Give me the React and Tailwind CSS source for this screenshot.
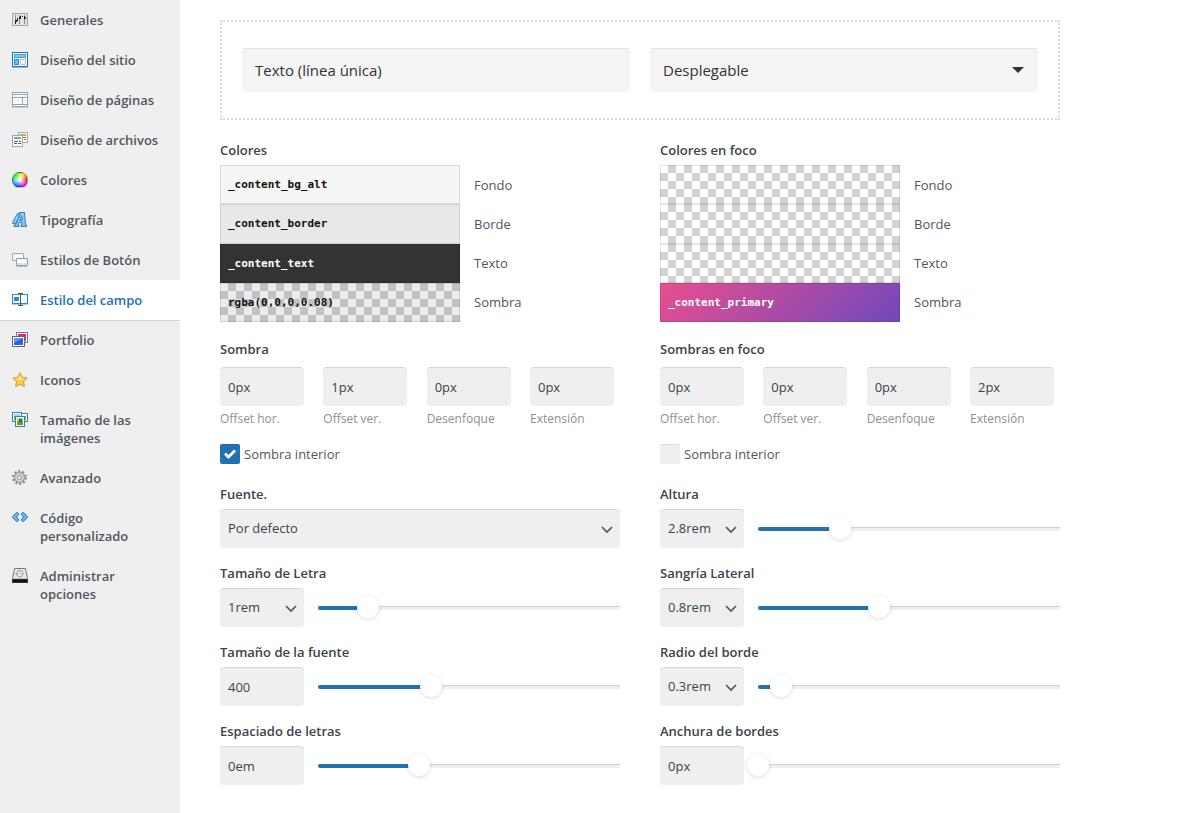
import { useState } from 'react';
import { clsx } from 'clsx';

const FIELD = 'h-[39px] rounded bg-[#efefef] px-2 text-[13px] text-[#3c434a] shadow-[inset_0_1px_0_rgba(0,0,0,0.1)] outline-none';

// 16px sidebar icons
const icons = {
  general: (
    <>
      <rect x="0.5" y="1.5" width="15" height="12" fill="#e4e4e4" stroke="#a5a5a5" />
      <path d="M3.5 3v9M7.5 3v9M12.5 3v9" stroke="#8a8a8a" />
      <path d="M3.5 8v4M5.5 6v3M8.5 4v3M12.5 4v3M10.5 4v1" stroke="#222" />
      <path d="M3 8h2v2H3zM7 5h2v2H7zM12 5h2v2h-2z" fill="#222" />
    </>
  ),
  site: (
    <>
      <rect x="0.5" y="0.5" width="15" height="14" fill="#fff" stroke="#0a7bc4" />
      <rect x="2.5" y="2.5" width="11" height="3" fill="#7fc4f4" stroke="#4a9fdc" />
      <rect x="2.5" y="7.5" width="4" height="5" fill="#6ebcf5" stroke="#2a8bd6" />
      <rect x="8.5" y="7.5" width="5" height="5" fill="#f4f4f4" stroke="#c4c4c4" />
      <path d="M0 15.5h16" stroke="#9dbdd2" />
    </>
  ),
  pages: (
    <>
      <rect x="0.5" y="0.5" width="15" height="14" fill="#fafcfd" stroke="#8ea4b8" />
      <path d="M1 2.5h14M1 5.5h14M10.5 5v7M1 12.5h14" stroke="#8ea4b8" />
      <path d="M3 8.5h5M12 8.5h2" stroke="#e4ebf0" />
      <path d="M0 15.5h16" stroke="#c3ccd4" />
    </>
  ),
  archives: (
    <>
      <rect x="6.5" y="0.5" width="9" height="10" fill="#fff" stroke="#a9a9a9" />
      <path d="M8 3h6" stroke="#f09a28" strokeWidth="2" />
      <path d="M11 5.5h3M12 7.5h2" stroke="#777" />
      <rect x="0.5" y="3.5" width="10" height="11" fill="#fff" stroke="#a5a5a5" />
      <path d="M2 6h7" stroke="#5fa8e6" strokeWidth="2" />
      <path d="M2 9.5h4M7 9.5h2M2 11.5h3M6 11.5h3" stroke="#555" />
    </>
  ),
  type: (
    <g fill="#8cccf5" stroke="#2b80be" strokeLinejoin="round">
      <path d="M5.500 1.500L.5 10.500v1h3l1.500-3h2v-7z" />
      <path d="M7.500.5h5l1 12.500h1v1.500H9V13h1v-2.500H7L6 13h1v1.500H2V13h1.500L8 3z" />
      <path d="M8 8.500h2V4.500z" fill="#efefef" />
    </g>
  ),
  buttons: (
    <>
      <rect x="0.5" y="1.500" width="11" height="7" rx="0.5" fill="#f6f7f9" stroke="#9ba8b8" />
      <rect x="4.500" y="6.500" width="11" height="7" rx="0.5" fill="#fff" stroke="#8997ab" />
      <path d="M5 12h10" stroke="#dfe4ec" strokeWidth="2" />
      <path d="M4 14.500h12" stroke="#bdc4cf" />
    </>
  ),
  field: (
    <>
      <rect x="0.5" y="2.500" width="15" height="9" fill="#fff" stroke="#2b8ccd" />
      <path d="M0 12.500h16" stroke="#a5cde8" />
      <rect x="2" y="5" width="5" height="4" fill="#2b8ccd" />
      <path d="M6 1.500h5M6 13.500h5M8.500 2v11" stroke="#555" />
    </>
  ),
  portfolio: (
    <>
      <rect x="4.500" y="0.500" width="11" height="10" fill="#fff" stroke="#777" />
      <path d="M6 2h8v7H6z" fill="#f51789" />
      <rect x="0.500" y="4.500" width="12" height="10" fill="#fff" stroke="#666" />
      <path d="M2 6h9v7H2z" fill="#1768e8" />
      <path d="M2 6h9L2 11z" fill="#5a9af5" />
    </>
  ),
  star: (
    <>
      <path d="M8 .8l2.200 4.600 5 .7-3.700 3.500.9 5L8 12.300l-4.400 2.300.9-5L.8 6.100l5-.7z" fill="#fcc845" stroke="#d99a2b" strokeLinejoin="round" />
      <path d="M8 3l1.500 3.200 3 .6L8 8 3.500 6.800l3-.6z" fill="#fee89a" />
    </>
  ),
  sizes: (
    <>
      <rect x="0.500" y="0.500" width="9" height="9" fill="#fff" stroke="#3b81ad" />
      <rect x="9.500" y="1.500" width="6" height="8" fill="#fff" stroke="#3b81ad" />
      <path d="M2 2h6v2H2z" fill="#9bd3f3" />
      <path d="M2 4h6v4H2zM11 4h3v4h-3z" fill="#70ad32" />
      <rect x="3.500" y="4.500" width="9" height="10" fill="#fff" stroke="#3b81ad" />
      <path d="M5 6h6v7H5z" fill="#8fcdf0" />
      <path d="M5 10l2-1 4 1v3H5z" fill="#5e9e22" />
      <path d="M7 7h3v3H7z" fill="#317713" />
      <path d="M5 7h2v2H5z" fill="#f2d44c" />
    </>
  ),
  gear: (
    <>
      <circle cx="7.500" cy="7.500" r="6.300" fill="none" stroke="#8b8b8b" strokeWidth="2.400" strokeDasharray="2 1.960" />
      <circle cx="7.500" cy="7.500" r="5" fill="#d2d2d2" stroke="#8b8b8b" />
      <circle cx="7.500" cy="7.500" r="2" fill="#efefef" stroke="#8b8b8b" />
    </>
  ),
  code: (
    <g fill="#59b8ee" stroke="#1f77b4" strokeWidth="0.9" strokeLinejoin="round">
      <path d="M4.500 2.500h1l1.500 1.500L4.500 7 7 10l-1.500 1.500h-1L.5 7.500v-1z" />
      <path d="M11.500 2.500h-1L9 4l2.500 3L9 10l1.500 1.500h1l4-4v-1z" />
    </g>
  ),
  disk: (
    <>
      <path d="M2.500.5h11l2 10v4H.5v-4z" fill="#e6e6e6" stroke="#777" />
      <path d="M.5 11.500h15v3H.5z" fill="#111" stroke="#333" />
      <path d="M1 10.500h14" stroke="#bbb" />
      <circle cx="8" cy="5.500" r="3.200" fill="#f6f6f6" stroke="#a0a0a0" />
      <path d="M8 3.500v2l2 1M3.500 5l1.500 2 1-2" fill="none" stroke="#999" />
    </>
  ),
};

const menu = [
  { icon: 'general', label: 'Generales' },
  { icon: 'site', label: 'Diseño del sitio' },
  { icon: 'pages', label: 'Diseño de páginas' },
  { icon: 'archives', label: 'Diseño de archivos' },
  { icon: 'wheel', label: 'Colores' },
  { icon: 'type', label: 'Tipografía' },
  { icon: 'buttons', label: 'Estilos de Botón' },
  { icon: 'field', label: 'Estilo del campo', active: true },
  { icon: 'portfolio', label: 'Portfolio' },
  { icon: 'star', label: 'Iconos' },
  { icon: 'sizes', label: 'Tamaño de las imágenes' },
  { icon: 'gear', label: 'Avanzado' },
  { icon: 'code', label: 'Código personalizado' },
  { icon: 'disk', label: 'Administrar opciones' },
];

const CHECKER = 'bg-[repeating-conic-gradient(#d2d2d2_0_25%,#fff_0_50%)] bg-size-[16px_16px] text-[#111]';

const colors = [
  { label: 'Fondo', value: '_content_bg_alt', look: 'bg-[#f5f5f5] text-[#111]' },
  { label: 'Borde', value: '_content_border', look: 'bg-[#e8e8e8] text-[#111]' },
  { label: 'Texto', value: '_content_text', look: 'bg-[#333] text-white' },
  {
    label: 'Sombra',
    value: 'rgba(0,0,0,0.08)',
    look: 'bg-[linear-gradient(rgba(0,0,0,0.08),rgba(0,0,0,0.08)),repeating-conic-gradient(#d2d2d2_0_25%,#fff_0_50%)] bg-size-[16px_16px] text-[#111]',
  },
];

const focusColors = [
  { label: 'Fondo', value: '', look: CHECKER },
  { label: 'Borde', value: '', look: CHECKER },
  { label: 'Texto', value: '', look: CHECKER },
  { label: 'Sombra', value: '_content_primary', look: 'bg-[linear-gradient(135deg,#e94e8f,#7049ba)] text-white' },
];

function MenuIcon({ name }) {
  if (name === 'wheel') {
    return (
      <span className="mt-px size-4 shrink-0 rounded-full border border-black/15 bg-[radial-gradient(circle,#fff_5%,transparent_75%),conic-gradient(#cf0,#fd0,#f60,#f00_25%,#f0a,#c0f,#40f_50%,#06f,#0cf_72%,#0e6,#3e0,#cf0)]" />
    );
  }
  return (
    <svg viewBox="0 0 16 16" className="mt-px size-4 shrink-0" aria-hidden="true">
      {icons[name]}
    </svg>
  );
}

function Sidebar() {
  return (
    <nav className="w-[180px] shrink-0 bg-[#efefef]">
      {menu.map((item) => (
        <a
          key={item.label}
          href="#"
          className={clsx(
            'flex items-start gap-3 px-3 py-[11px] text-[13px] leading-[18px] font-semibold',
            item.active ? 'bg-white text-[#2271b1] shadow-[0_1px_0_rgba(0,0,0,0.12)]' : 'text-[#50575e]'
          )}
        >
          <MenuIcon name={item.icon} />
          <span>{item.label}</span>
        </a>
      ))}
    </nav>
  );
}

function Chevron() {
  return (
    <svg viewBox="0 0 12 8" className="pointer-events-none absolute top-[17px] right-[7px] h-2 w-3" aria-hidden="true">
      <path d="M1 1l5 5 5-5" fill="none" stroke="#50575e" strokeWidth="1.700" />
    </svg>
  );
}

function Title({ children, htmlFor }) {
  const Tag = htmlFor ? 'label' : 'h3';
  return (
    <Tag htmlFor={htmlFor} className="block text-[13px] leading-[18px] font-semibold text-[#3c434a]">
      {children}
    </Tag>
  );
}

function Swatches({ id, title, items }) {
  return (
    <section>
      <Title>{title}</Title>
      <div className="mt-[6px] grid h-[157px] grid-rows-4">
        {items.map((item) => (
          <div key={item.label} className="flex min-h-0 items-center gap-[14px]">
            <input
              id={`${id}-${item.label}`}
              defaultValue={item.value}
              className={clsx(
                "h-full w-60 px-2 font-['DejaVu_Sans_Mono',monospace] text-[11px] font-bold shadow-[inset_0_0_0_1px_rgba(0,0,0,0.1)] outline-none",
                item.look
              )}
            />
            <label htmlFor={`${id}-${item.label}`} className="text-[13px] leading-[18px]">
              {item.label}
            </label>
          </div>
        ))}
      </div>
    </section>
  );
}

function Shadow({ id, title, values, inset }) {
  const captions = ['Offset hor.', 'Offset ver.', 'Desenfoque', 'Extensión'];
  return (
    <section className="mt-[18px]">
      <Title>{title}</Title>
      <div className="mt-[9px] mr-[6px] flex justify-between">
        {captions.map((caption, i) => (
          <div key={caption} className="w-[84px]">
            <input id={`${id}-${i}`} defaultValue={values[i]} className={clsx(FIELD, 'block w-full')} />
            <label htmlFor={`${id}-${i}`} className="mt-1 block text-[12px] leading-[18px] text-[#8c8f94]">
              {caption}
            </label>
          </div>
        ))}
      </div>
      <label className="relative mt-4 flex w-fit items-center gap-1 text-[13px] leading-[18px]">
        <input
          type="checkbox"
          defaultChecked={inset}
          className="peer size-5 appearance-none rounded-xs bg-[#efefef] shadow-[inset_0_1px_0_rgba(0,0,0,0.08)] checked:bg-[#2271b1]"
        />
        <svg viewBox="0 0 20 20" className="absolute left-0 hidden size-5 peer-checked:block" aria-hidden="true">
          <path d="M5 9.500l3.500 3.500L15 6.500" fill="none" stroke="#fff" strokeWidth="2.800" />
        </svg>
        Sombra interior
      </label>
    </section>
  );
}

function SliderField({ id, title, value, unit, start }) {
  const [position, setPosition] = useState(start);
  return (
    <div>
      <Title htmlFor={id}>{title}</Title>
      <div className="mt-[6px] flex items-center gap-[14px]">
        <div className="relative w-[84px] shrink-0">
          {unit ? (
            <>
              <select id={id} className={clsx(FIELD, 'block w-full appearance-none')}>
                <option>{value}</option>
              </select>
              <Chevron />
            </>
          ) : (
            <input id={id} defaultValue={value} className={clsx(FIELD, 'block w-full')} />
          )}
        </div>
        <div className="relative h-1 flex-1 bg-[#efefef] shadow-[inset_0_1px_0_rgba(0,0,0,0.12)]">
          <div className="h-1 rounded-l-full bg-[#2271b1]" style={{ width: `${position}%` }} />
          <input
            type="range"
            aria-label={title}
            min="0"
            max="100"
            step="0.5"
            value={position}
            onChange={(e) => setPosition(Number(e.target.value))}
            className="absolute -inset-x-[11px] -top-[10px] h-[22px] appearance-none bg-transparent outline-none [&::-webkit-slider-thumb]:size-[22px] [&::-webkit-slider-thumb]:appearance-none [&::-webkit-slider-thumb]:rounded-full [&::-webkit-slider-thumb]:bg-white [&::-webkit-slider-thumb]:shadow-[0_1px_4px_rgba(0,0,0,0.15)]"
          />
        </div>
      </div>
    </div>
  );
}

export default function App() {
  return (
    <div className="flex min-h-screen bg-white font-['Open_Sans','Noto_Sans',sans-serif] text-[#50575e]">
      <Sidebar />
      <main className="max-w-[920px] flex-1 px-10 py-5">
        {/* Live preview */}
        <div className="grid grid-cols-2 gap-5 border-2 border-dotted border-[#d8d8d8] px-5 py-[26px]">
          <input
            aria-label="Texto (línea única)"
            placeholder="Texto (línea única)"
            className="h-11 w-full rounded bg-[#f5f5f5] px-[13px] text-[15px] shadow-[inset_0_1px_0_rgba(0,0,0,0.08)] outline-none placeholder:text-[#333]"
          />
          <div className="relative">
            <select
              aria-label="Desplegable"
              className="h-11 w-full appearance-none rounded bg-[#f5f5f5] px-[13px] text-[15px] text-[#333] shadow-[inset_0_1px_0_rgba(0,0,0,0.08)] outline-none"
            >
              <option>Desplegable</option>
            </select>
            <svg viewBox="0 0 12 6" className="pointer-events-none absolute top-[19px] right-[14px] h-[6px] w-3" aria-hidden="true">
              <path d="M0 0h12L6 6z" fill="#333" />
            </svg>
          </div>
        </div>

        <div className="mt-[21px] grid grid-cols-2 gap-x-10">
          <div>
            <Swatches id="color" title="Colores" items={colors} />
            <Shadow id="shadow" title="Sombra" values={['0px', '1px', '0px', '0px']} inset />
            <div className="mt-[21px] flex flex-col gap-4">
              <div>
                <Title htmlFor="font">Fuente.</Title>
                <div className="relative mt-[6px]">
                  <select id="font" className={clsx(FIELD, 'block w-full appearance-none')}>
                    <option>Por defecto</option>
                  </select>
                  <Chevron />
                </div>
              </div>
              <SliderField id="size" title="Tamaño de Letra" value="1rem" unit start={16.5} />
              <SliderField id="weight" title="Tamaño de la fuente" value="400" start={37.5} />
              <SliderField id="spacing" title="Espaciado de letras" value="0em" start={33.5} />
            </div>
          </div>
          <div>
            <Swatches id="focus-color" title="Colores en foco" items={focusColors} />
            <Shadow id="focus-shadow" title="Sombras en foco" values={['0px', '0px', '0px', '2px']} />
            <div className="mt-[21px] flex flex-col gap-4">
              <SliderField id="height" title="Altura" value="2.8rem" unit start={27} />
              <SliderField id="indent" title="Sangría Lateral" value="0.8rem" unit start={40} />
              <SliderField id="radius" title="Radio del borde" value="0.3rem" unit start={7.5} />
              <SliderField id="border" title="Anchura de bordes" value="0px" start={0} />
            </div>
          </div>
        </div>
      </main>
    </div>
  );
}
